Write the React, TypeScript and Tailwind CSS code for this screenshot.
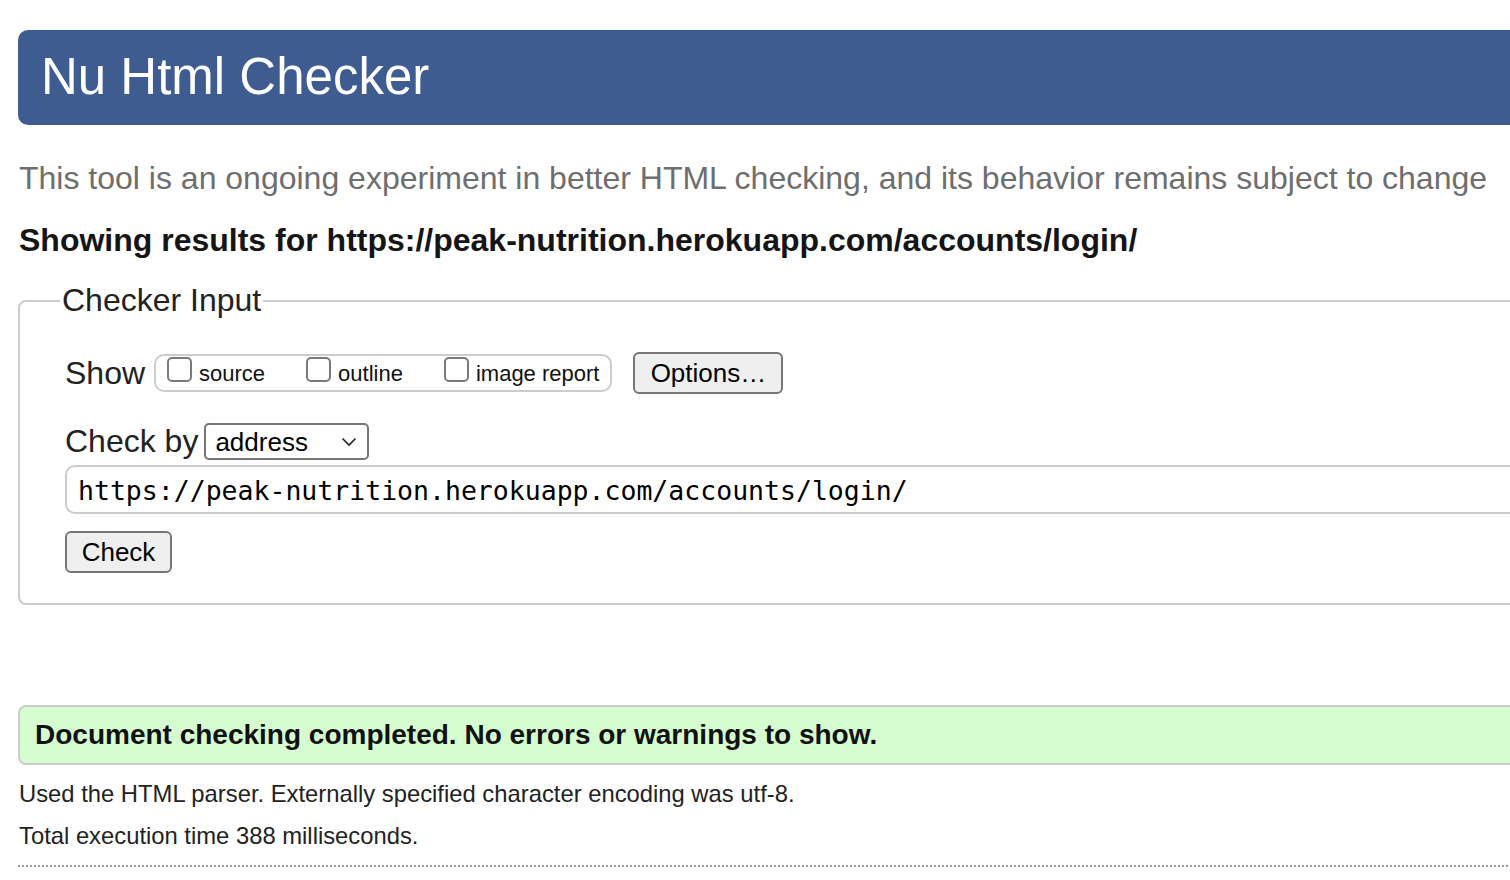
import React from 'react';

const options = ['source', 'outline', 'image report'];

const Checkbox = ({ label }: { label: string }) => (
    <label className="flex items-end gap-[7px] pt-px">
        <span className="mb-[3px] w-[25px] h-[25px] rounded-[5px] border-2 border-[#7a7a7a] bg-white" />
        <span className="text-[22px] leading-[22px] text-[#111]">{label}</span>
    </label>
);

const Button = ({ children, width }: { children: React.ReactNode; width: string }) => (
    <button
        type="button"
        className={`${width} h-[42px] rounded-[6px] border-2 border-[#767676] bg-[#efefef] text-[26px] leading-none text-black`}
    >
        {children}
    </button>
);

export default function App() {
    return (
        <div className="w-[1510px] h-[880px] overflow-hidden bg-white font-['Liberation_Sans',Arial,sans-serif]">
            <div className="w-[1580px] pl-[18px] pt-[30px]">
                {/* Header */}
                <header className="h-[95px] bg-[#3e5c8f] rounded-l-[10px] flex items-center pl-[23px]">
                    <h1 className="text-[51px] leading-none text-white -mt-[2px]">Nu Html Checker</h1>
                </header>

                <p className="mt-[35px] pl-px text-[32px] leading-[37px] text-[#6e6e6e]">
                    This tool is an ongoing experiment in better HTML checking, and its behavior remains subject to change
                </p>

                <p className="mt-[25px] pl-px text-[32px] leading-[37px] font-bold text-[#151515]">
                    Showing results for https://peak-nutrition.herokuapp.com/accounts/login/
                </p>

                {/* Checker Input */}
                <fieldset className="mt-[23px] border-2 border-[#cccccc] rounded-[8px] pl-[46px] pb-[30px]">
                    <legend className="-ml-[6px] px-[2px] text-[32px] leading-[37px] text-[#222]">Checker Input</legend>

                    <div className="mt-[33px] h-[42px] flex items-center">
                        <span className="-ml-px text-[32px] leading-[37px] text-[#222]">Show</span>
                        <div className="ml-[9px] h-[38px] rounded-[10px] border-2 border-[#cccccc] flex items-start gap-[41px] px-[11px]">
                            {options.map((o) => (
                                <Checkbox key={o} label={o} />
                            ))}
                        </div>
                        <div className="ml-[21px]">
                            <Button width="w-[150px]">Options…</Button>
                        </div>
                    </div>

                    <div className="mt-[29px] h-[37px] flex items-center">
                        <span className="-ml-px text-[32px] leading-[37px] text-[#222]">Check by</span>
                        <div className="ml-[6px] w-[165px] h-[37px] rounded-[5px] border-2 border-[#767676] bg-white flex items-center justify-between pl-[9px] pr-[10px]">
                            <span className="text-[26px] leading-none text-black">address</span>
                            <svg width="16" height="10" viewBox="0 0 16 10" fill="none">
                                <polyline points="1.5,1.5 8,8 14.5,1.5" stroke="#222" strokeWidth="1.6" />
                            </svg>
                        </div>
                    </div>

                    <div className="mt-[5px] -ml-px h-[49px] rounded-[10px] border-2 border-[#cccccc] flex items-center pl-[11px] pt-[4px]">
                        <span className="font-['DejaVu_Sans_Mono',monospace] text-[26.5px] leading-none text-black">
                            https://peak-nutrition.herokuapp.com/accounts/login/
                        </span>
                    </div>

                    <div className="mt-[17px] -ml-px">
                        <Button width="w-[107px]">Check</Button>
                    </div>
                </fieldset>

                {/* Result */}
                <div className="mt-[100px] h-[60px] rounded-l-[8px] border-2 border-[#cccccc] bg-[#d6fdd0] flex items-center pl-[15px]">
                    <p className="text-[28px] leading-none font-bold text-[#111]">
                        Document checking completed. No errors or warnings to show.
                    </p>
                </div>

                <p className="mt-[14px] pl-px text-[23.8px] leading-[30px] text-[#222]">
                    Used the HTML parser. Externally specified character encoding was utf-8.
                </p>
                <p className="mt-[12px] pl-px text-[23.8px] leading-[30px] text-[#222]">
                    Total execution time 388 milliseconds.
                </p>

                <div className="mt-[14px] border-t-2 border-dotted border-[#9a9a9a]" />
            </div>
        </div>
    );
}
